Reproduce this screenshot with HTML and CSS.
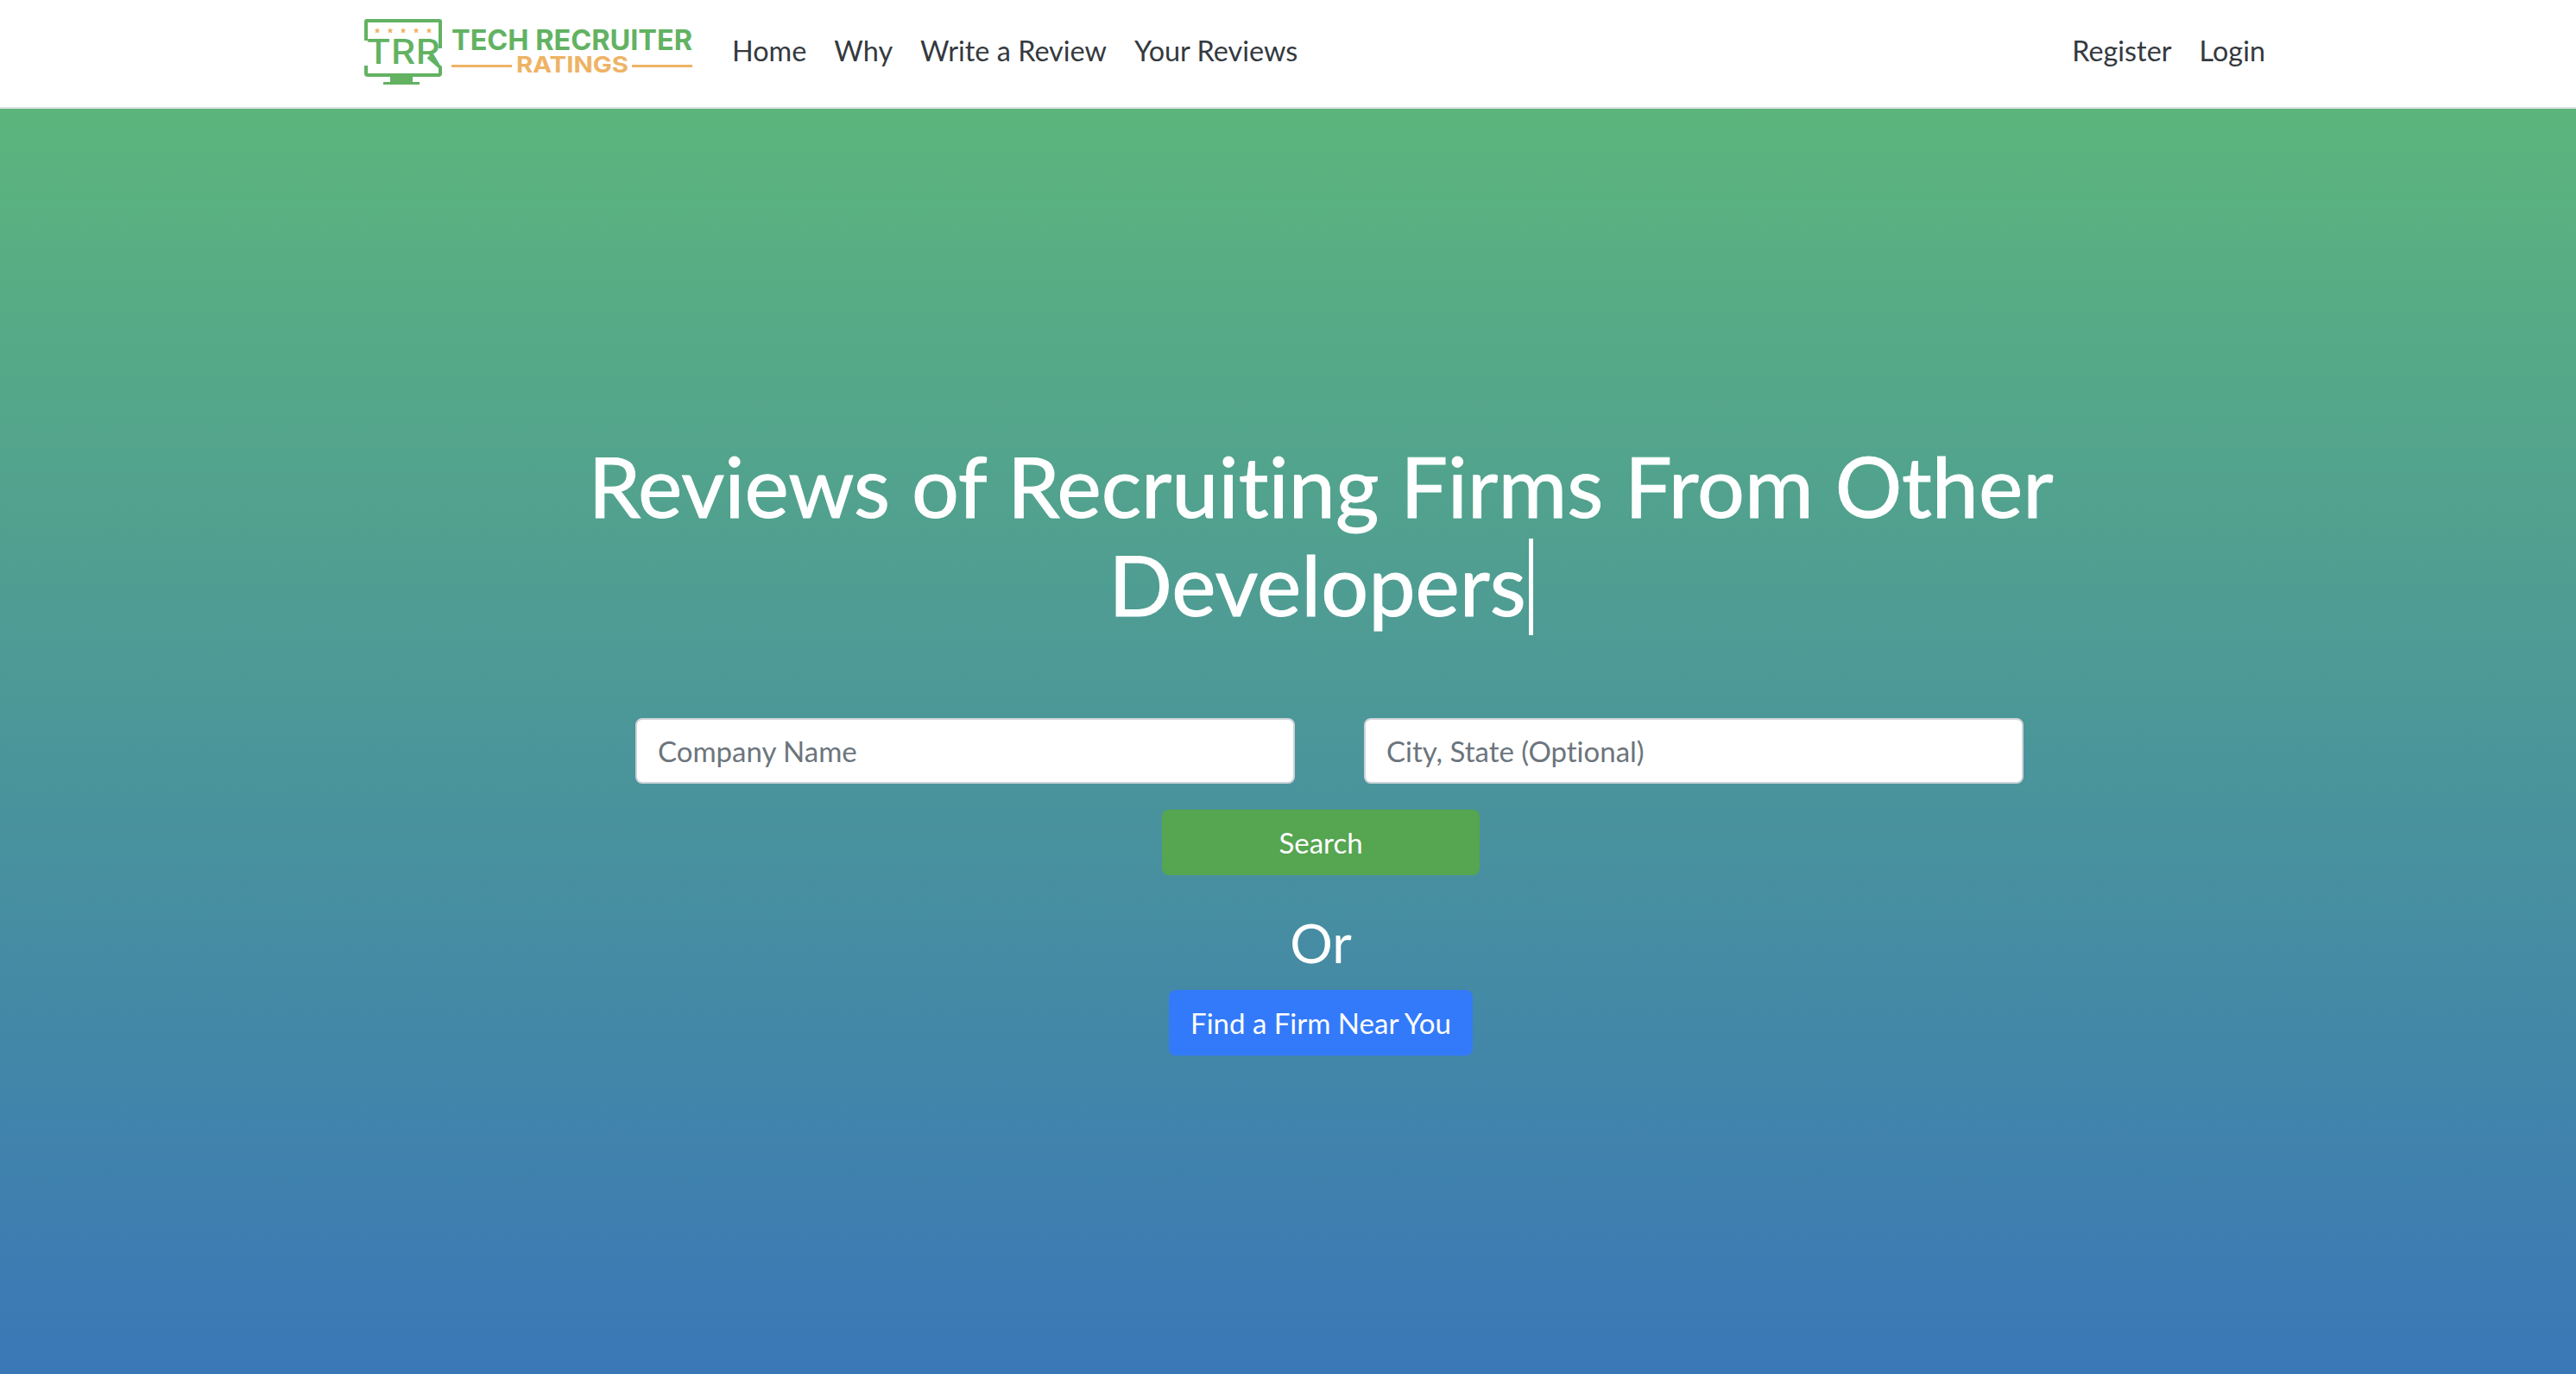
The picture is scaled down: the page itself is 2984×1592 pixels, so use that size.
FILE: index.html
```html
<!DOCTYPE html>
<html lang="en">
<head>
    <meta charset="UTF-8">
    <meta name="viewport" content="width=device-width, initial-scale=1.0">
    <title>Tech Recruiter Ratings</title>
    <link rel="stylesheet" href="styles.css">
</head>
<body>
    <nav class="navbar">
        <a class="brand" href="#">
            <svg class="logo" width="386" height="80" viewBox="0 0 386 80">
                <path class="logo-line" d="M4 27 V5 Q4 4 5 4 H89 Q90 4 90 5 V36"/>
                <path class="logo-line" d="M4 56 V65 Q4 67 6 67 H88 Q90 67 90 65 V58 L76 46"/>
                <rect class="logo-green" x="32" y="69" width="26" height="7"/>
                <rect class="logo-green" x="24" y="75" width="42" height="3"/>
                <g class="logo-orange">
                    <path d="M17 12 l1 2.2 2.4 .3 -1.8 1.6 .5 2.4 -2.1 -1.2 -2.1 1.2 .5 -2.4 -1.8 -1.6 2.4 -.3 z"/>
                    <path d="M32 12 l1 2.2 2.4 .3 -1.8 1.6 .5 2.4 -2.1 -1.2 -2.1 1.2 .5 -2.4 -1.8 -1.6 2.4 -.3 z"/>
                    <path d="M47 12 l1 2.2 2.4 .3 -1.8 1.6 .5 2.4 -2.1 -1.2 -2.1 1.2 .5 -2.4 -1.8 -1.6 2.4 -.3 z"/>
                    <path d="M62 12 l1 2.2 2.4 .3 -1.8 1.6 .5 2.4 -2.1 -1.2 -2.1 1.2 .5 -2.4 -1.8 -1.6 2.4 -.3 z"/>
                    <path d="M77 12 l1 2.2 2.4 .3 -1.8 1.6 .5 2.4 -2.1 -1.2 -2.1 1.2 .5 -2.4 -1.8 -1.6 2.4 -.3 z"/>
                </g>
                <text class="logo-mark" x="4" y="54" textLength="86" lengthAdjust="spacingAndGlyphs">TRR</text>
                <text class="logo-top" x="103" y="38" textLength="279" lengthAdjust="spacingAndGlyphs">TECH RECRUITER</text>
                <rect class="logo-orange" x="103" y="55" width="70" height="3"/>
                <text class="logo-bottom" x="178" y="64" textLength="130" lengthAdjust="spacingAndGlyphs">RATINGS</text>
                <rect class="logo-orange" x="312" y="55" width="70" height="3"/>
            </svg>
        </a>
        <ul class="nav-links">
            <li><a href="#">Home</a></li>
            <li><a href="#">Why</a></li>
            <li><a href="#">Write a Review</a></li>
            <li><a href="#">Your Reviews</a></li>
        </ul>
        <ul class="nav-links nav-right">
            <li><a href="#">Register</a></li>
            <li><a href="#">Login</a></li>
        </ul>
    </nav>

    <main class="hero">
        <h1 class="headline">Reviews of Recruiting Firms From Other Developers<span class="cursor"></span></h1>
        <form class="search-form">
            <div class="search-fields">
                <input class="field" type="text" placeholder="Company Name">
                <input class="field" type="text" placeholder="City, State (Optional)">
            </div>
            <button class="btn btn-search" type="button">Search</button>
        </form>
        <p class="or">Or</p>
        <button class="btn btn-near" type="button">Find a Firm Near You</button>
    </main>
</body>
</html>
```

FILE: styles.css
```css
* {
    box-sizing: border-box;
}
html, body {
    height: 100%;
}
body {
    margin: 0;
    display: flex;
    flex-direction: column;
    font-family: Lato, "Noto Sans", sans-serif;
    font-variant-ligatures: none;
    color: #343a40;
    background: #fff;
}
a {
    color: inherit;
    text-decoration: none;
}
.navbar {
    display: flex;
    align-items: center;
    height: 126px;
    padding: 0 360px 8px 420px;
    background: #fff;
    border-bottom: 2px solid #dee2e6;
}
.brand {
    display: flex;
    margin: 4px 42px 0 0;
}
.logo-line {
    fill: none;
    stroke: #62b262;
    stroke-width: 4;
}
.logo-green {
    fill: #62b262;
}
.logo-orange {
    fill: #eeb365;
}
.logo-mark {
    font: 500 39px Inter, sans-serif;
    fill: #62b262;
}
.logo-top {
    font: 700 32px Inter, sans-serif;
    fill: #62b262;
}
.logo-bottom {
    font: 700 26px Inter, sans-serif;
    fill: #eeb365;
}
.nav-links {
    display: flex;
    gap: 32px;
    margin: 0;
    padding: 0;
    list-style: none;
    font-size: 32.4px;
}
.nav-right {
    margin-left: auto;
}
.hero {
    flex: 1;
    display: flex;
    flex-direction: column;
    align-items: center;
    padding: 380px 0 0 76px;
    background: linear-gradient(#5cb57c, #3a77b7);
    color: #fff;
}
.headline {
    width: 1800px;
    margin: 0 0 96px;
    font-size: 97px;
    font-weight: 400;
    line-height: 114px;
    text-align: center;
    -webkit-text-stroke: 1px #fff;
}
.cursor {
    display: inline-block;
    width: 5px;
    height: 112px;
    margin-left: 3px;
    vertical-align: -22px;
    background: #fff;
}
.search-form {
    display: flex;
    flex-direction: column;
    align-items: center;
}
.search-fields {
    display: flex;
    gap: 80px;
    margin: 0 0 30px 20px;
}
.field {
    width: 764px;
    height: 76px;
    padding: 0 24px;
    font: 33px Lato, sans-serif;
    font-variant-ligatures: none;
    color: #495057;
    background: #fff;
    border: 2px solid #ced4da;
    border-radius: 8px;
}
.field::placeholder {
    color: #6c757d;
}
.btn {
    height: 76px;
    border: none;
    border-radius: 8px;
    font: 33px Lato, sans-serif;
    color: #fff;
}
.btn-search {
    width: 368px;
    background: #55a551;
}
.btn-near {
    width: 352px;
    background: #337afa;
}
.or {
    margin: 40px 0 17px;
    font-size: 62px;
    line-height: 76px;
}
```
